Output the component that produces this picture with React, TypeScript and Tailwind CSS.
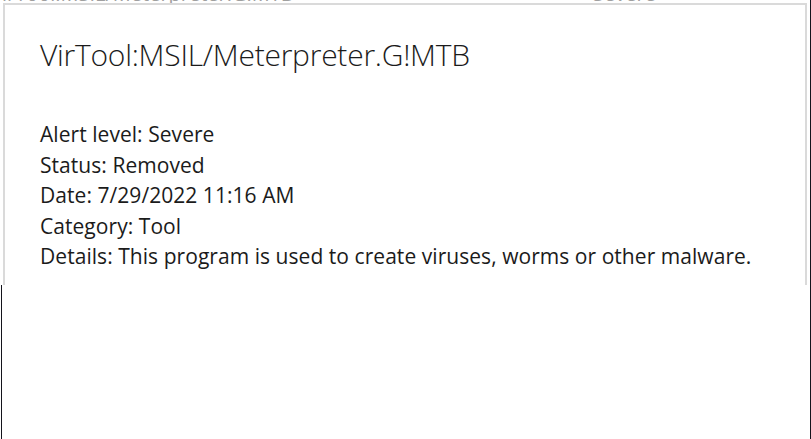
export default function App() {
  const rows = [
    "Alert level: Severe",
    "Status: Removed",
    "Date: 7/29/2022 11:16 AM",
    "Category: Tool",
    "Details: This program is used to create viruses, worms or other malware.",
  ];

  return (
    <div
      className="w-[811px] h-[439px] bg-white flex flex-col border-r border-[#14141c] overflow-hidden"
      style={{ fontFamily: '"Open Sans", "Noto Sans", sans-serif' }}
    >
      {/* row above, cut off by the screenshot */}
      <div className="h-[3px] overflow-hidden shrink-0">
        <div className="-mt-[18px] ml-[-10px] flex text-[20px] leading-[24px] text-[#a0a0a0] whitespace-nowrap">
          <span className="w-[603px]">VirTool:MSIL/Meterpreter.G!MTB</span>
          <span>Severe</span>
        </div>
      </div>

      <div className="mx-[3px] h-[282px] shrink-0 border-t-2 border-x-2 border-[#dadada] pl-[35px] pt-[32px] text-[#1b1b1b]">
        <h1 className="text-[30px] leading-[36px] font-light tracking-[-0.25px]">
          VirTool:MSIL/Meterpreter.G!MTB
        </h1>
        <div className="mt-[46px] text-[21px] leading-[30.5px] tracking-[0.05px]">
          {rows.map((r) => (
            <div key={r}>{r}</div>
          ))}
        </div>
      </div>

      <div className="flex-1 ml-[1px] border-l border-[#14141c]" />
    </div>
  );
}
